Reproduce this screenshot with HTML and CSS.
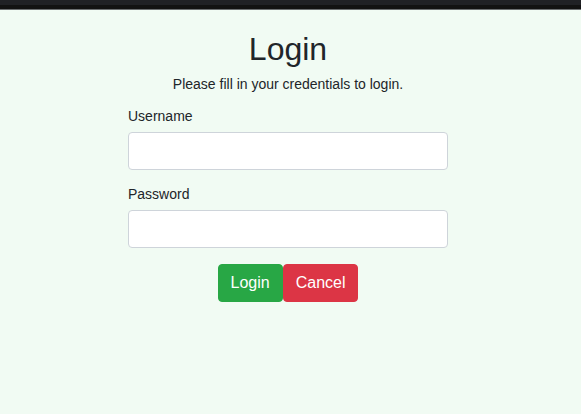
FILE: index.html
```html
<!DOCTYPE html>
<html lang="en">
<head>
<meta charset="utf-8">
<title>Login</title>
<link rel="stylesheet" href="styles.css">
</head>
<body>
<div class="topbar"><div class="topbar-upper"></div><div class="topbar-lower"></div></div>
<main class="page">
  <div class="wrapper">
    <h2 class="title">Login</h2>
    <p class="subtitle">Please fill in your credentials to login.</p>
    <form class="form">
      <div class="field">
        <label class="label" for="username">Username</label>
        <input class="input" id="username" type="text">
      </div>
      <div class="field">
        <label class="label" for="password">Password</label>
        <input class="input" id="password" type="password">
      </div>
      <div class="actions">
        <button type="submit" class="btn btn-success">Login</button>
        <button type="button" class="btn btn-danger">Cancel</button>
      </div>
    </form>
  </div>
</main>
</body>
</html>
```
FILE: styles.css
```css
* { box-sizing: border-box; }
html, body { margin: 0; padding: 0; height: 100%; }
body {
  background: #f1fbf3;
  font-family: "Liberation Sans", Arial, sans-serif;
  color: #212529;
}
.topbar { display: flex; flex-direction: column; }
.topbar-upper { height: 5px; background: #202125; }
.topbar-lower { background: #121212; border-bottom: 1px solid #6b6e70; height: 5px; }
.page { display: flex; justify-content: center; padding-right: 5px; }
.wrapper { width: 320px; display: flex; flex-direction: column; }
.title {
  margin: 20px 0 0;
  font-size: 32px;
  font-weight: 400;
  line-height: 38px;
  text-align: center;
}
.subtitle {
  margin: 6px 0 0;
  font-size: 14px;
  line-height: 20px;
  text-align: center;
}
.form { display: flex; flex-direction: column; margin-top: 12px; }
.field { display: flex; flex-direction: column; margin-bottom: 14px; }
.label { font-size: 14px; line-height: 20px; margin-bottom: 6px; }
.input {
  height: 38px;
  border: 1px solid #ced4da;
  border-radius: 4px;
  background: #fff;
  padding: 6px 12px;
  font-size: 16px;
  font-family: inherit;
}
.actions { display: flex; justify-content: center; margin-top: 2px; }
.btn {
  font-family: inherit;
  font-size: 16px;
  line-height: 24px;
  padding: 6px 12px;
  border: 1px solid transparent;
  border-radius: 4px;
  color: #fff;
  cursor: pointer;
}
.btn-success { background: #28a745; border-color: #28a745; }
.btn-danger { background: #dc3545; border-color: #dc3545; }
```
